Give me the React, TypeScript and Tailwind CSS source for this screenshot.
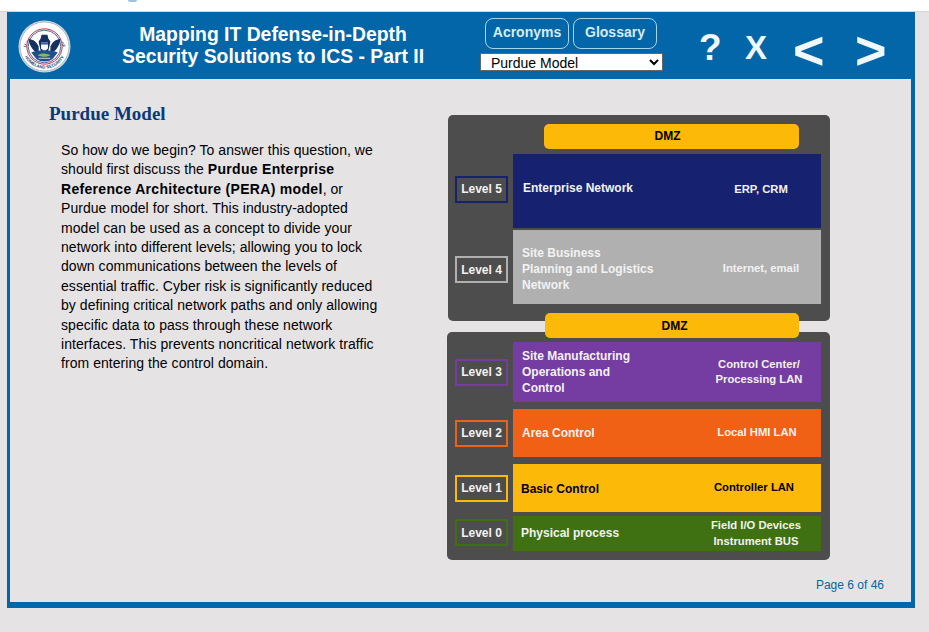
const sans = { fontFamily: '"Liberation Sans", Arial, sans-serif' };

const Seal = () => (
  <svg width="53" height="53" viewBox="0 0 54 54" className="shrink-0">
    <defs>
      <path id="sealTop" d="M7 32 A20.5 20.5 0 0 1 47 32" />
      <path id="sealBottom" d="M4.5 27 A22.5 22.5 0 0 0 49.5 27" />
    </defs>
    <circle cx="27" cy="27" r="26.5" fill="#d3d8de" />
    <circle cx="27" cy="27" r="25" fill="#ffffff" stroke="#9aa8b8" strokeWidth="0.8" />
    <text fontSize="4.4" fontWeight="700" fill="#1d3f78" fontFamily="Liberation Sans">
      <textPath href="#sealTop" startOffset="50%" textAnchor="middle">U.S. DEPARTMENT OF</textPath>
    </text>
    <text fontSize="4.4" fontWeight="700" fill="#1d3f78" fontFamily="Liberation Sans">
      <textPath href="#sealBottom" startOffset="50%" textAnchor="middle">HOMELAND SECURITY</textPath>
    </text>
    <circle cx="27" cy="27" r="18" fill="#ffffff" stroke="#c8323c" strokeWidth="1" />
    <circle cx="27" cy="27" r="16.6" fill="#ffffff" stroke="#1d3f78" strokeWidth="0.8" />
    <path d="M10.5 19 C16 20 19 22 21 27 L21 33 C16 33 12 27 10.5 19 Z" fill="#16305f" />
    <path d="M43.5 19 C38 20 35 22 33 27 L33 33 C38 33 42 27 43.5 19 Z" fill="#16305f" />
    <path d="M24 15 L30 15 L31 19 L33 22 L31 31 L27 33 L23 31 L21 22 L23 19 Z" fill="#16305f" />
    <path d="M23.5 23 H30.5 V29 L27 32 L23.5 29 Z" fill="#ffffff" />
    <path d="M23.5 23 H30.5 V25 H23.5 Z" fill="#2b5ba8" />
    <path d="M13.5 33 C20 30 34 30 40.5 33 L35 40 C30 43 24 43 19 40 Z" fill="#1d4f8f" />
    <path d="M20 36 C24 33 30 34 33 36 C30 38 24 38 20 36 Z" fill="#8bb65a" />
    <path d="M21 39 H33" stroke="#ffffff" strokeWidth="0.8" />
  </svg>
);

const LevelTag = ({ label, border, className = '' }: { label: string; border: string; className?: string }) => (
  <div className={`flex h-[27px] w-[53px] shrink-0 items-center justify-center border-2 text-[12px] font-bold text-[#f2f2f2] ${border} ${className}`}>
    {label}
  </div>
);

const Dmz = ({ className = '' }: { className?: string }) => (
  <div className={`flex h-[25px] items-center justify-center rounded-[5px] bg-[#fdb907] text-[12px] font-bold text-black ${className}`}>
    DMZ
  </div>
);

interface RowProps {
  level: string;
  tagBorder: string;
  tagClass?: string;
  color: string;
  height: string;
  margin?: string;
  textColor?: string;
  name: React.ReactNode;
  nameClass?: string;
  net: React.ReactNode;
  netClass: string;
}

const Row = ({ level, tagBorder, tagClass = '', color, height, margin = '', textColor = 'text-[#f2f2f2]', name, nameClass = 'pl-[9px]', net, netClass }: RowProps) => (
  <div className={`flex items-center ${height} ${margin}`}>
    <LevelTag label={level} border={tagBorder} className={tagClass} />
    <div className={`ml-[5px] flex h-full w-[308px] items-center justify-between text-[12px] font-bold leading-[16.3px] ${color} ${textColor}`}>
      <div className={nameClass}>{name}</div>
      <div className={`w-[100px] text-center text-[11.25px] leading-[15.3px] ${netClass}`}>{net}</div>
    </div>
  </div>
);

export default function App() {
  return (
    <div className="flex h-[632px] w-[929px] flex-col overflow-hidden bg-[#e6e3e5]" style={sans}>
      <div className="h-[12px] shrink-0 border-b border-[#d4d4d4] bg-white">
        <div className="ml-[128px] h-[2px] w-[9px] rounded-b-full bg-[#9cc3dc]" />
      </div>

      <main className="ml-[7px] flex h-[596px] w-[908px] flex-col bg-[#0366a8]">
        <header className="flex h-[67px] shrink-0 items-start text-white">
          <div className="ml-[11px] mt-[8px]">
            <Seal />
          </div>
          <h1 className="ml-[42px] mt-[11px] w-[320px] text-center text-[19.35px] font-bold leading-[22px]">
            Mapping IT Defense-in-Depth
            <br />
            Security Solutions to ICS - Part II
          </h1>
          <div className="ml-[47px] mt-[6px] flex w-[183px] flex-col">
            <div className="ml-[5px] flex gap-[4px] text-[14px] font-bold text-[#d5ecf8]">
              <button className="h-[31px] w-[84px] rounded-[8px] border border-[#a9d4ec] pb-[2px]">Acronyms</button>
              <button className="h-[31px] w-[84px] rounded-[8px] border border-[#a9d4ec] pb-[2px]">Glossary</button>
            </div>
            <select className="mt-[4px] h-[18px] w-[183px] border border-[#666666] bg-white pl-[6px] text-[14px] leading-[16px] text-black">
              <option>Purdue Model</option>
            </select>
          </div>
          <div className="ml-[36px] mt-[13px] flex h-[44px] items-center font-bold text-[#f0f8fc]">
            <span className="w-[21px] text-center text-[37px] leading-none">?</span>
            <span className="ml-[25px] w-[21px] text-center text-[33px] leading-none">X</span>
            <span className="ml-[27px] mt-[5px] w-[30px] text-center text-[54px] leading-none">&lt;</span>
            <span className="ml-[32px] mt-[5px] w-[31px] text-center text-[54px] leading-none">&gt;</span>
          </div>
        </header>

        <div className="mb-[6px] ml-[3px] mr-[4px] flex min-h-0 flex-1 bg-[#e6e3e5]">
          <section className="w-[437px] shrink-0 pl-[39px] pt-[23px]">
            <h2 className="text-[19px] font-bold leading-[24px] text-[#0b3a78]" style={{ fontFamily: '"Liberation Serif", serif' }}>
              Purdue Model
            </h2>
            <p className="ml-[12px] mt-[15px] w-[322px] text-[14px] leading-[19.4px] tracking-[0.05px] text-black">
              So how do we begin? To answer this question, we should first discuss the{' '}
              <b className="tracking-[0.31px]">Purdue Enterprise Reference Architecture (PERA) model</b>, or Purdue model for short. This
              industry-adopted model can be used as a concept to divide your network into different levels; allowing you
              to lock down communications between the levels of essential traffic. Cyber risk is significantly reduced by
              defining critical network paths and only allowing specific data to pass through these network interfaces.
              This prevents noncritical network traffic from entering the control domain.
            </p>
          </section>

          <section className="flex flex-1 flex-col pt-[36px]">
            <div className="ml-[1px] flex h-[206px] w-[382px] flex-col rounded-[5px] bg-[#4d4d4d] pl-[7px] pt-[9px]">
              <Dmz className="ml-[89px] w-[255px] pb-[2px] pr-[8px]" />
              <Row
                level="Level 5"
                tagBorder="border-[#16226e]"
                tagClass="mb-[4px]"
                color="bg-[#162270]"
                height="h-[74px]"
                margin="mt-[5px]"
                name="Enterprise Network"
                nameClass="pb-[6px] pl-[10px]"
                net="ERP, CRM"
                netClass="mr-[10px] pb-[2px]"
              />
              <Row
                level="Level 4"
                tagBorder="border-[#b0b0b0]"
                tagClass="mt-[5px]"
                color="bg-[#b0b0b0]"
                height="h-[74px]"
                margin="mt-[2px]"
                name={<>Site Business<br />Planning and Logistics<br />Network</>}
                nameClass="pl-[9px] pt-[4px]"
                net="Internet, email"
                netClass="mr-[10px] pt-[3px]"
              />
            </div>

            <div className="relative mt-[11px] flex h-[228px] w-[383px] flex-col rounded-[5px] bg-[#4d4d4d] px-[8px] pt-[10px]">
              <Dmz className="absolute left-[98px] top-[-19px] w-[254px] pl-[5px]" />
              <Row
                level="Level 3"
                tagBorder="border-[#753da2]"
                color="bg-[#753da2]"
                height="h-[60px]"
                name={<>Site Manufacturing<br />Operations and<br />Control</>}
                net={<>Control Center/<br />Processing LAN</>}
                netClass="mr-[12px]"
              />
              <Row
                level="Level 2"
                tagBorder="border-[#f06115]"
                color="bg-[#f06115]"
                height="h-[48px]"
                margin="mt-[7px]"
                name="Area Control"
                net="Local HMI LAN"
                netClass="mr-[14px]"
              />
              <Row
                level="Level 1"
                tagBorder="border-[#fdb907]"
                color="bg-[#fdb907]"
                height="h-[48px]"
                margin="mt-[7px]"
                textColor="text-black"
                name="Basic Control"
                nameClass="pl-[8px] pt-[2px]"
                net="Controller LAN"
                netClass="mr-[17px]"
              />
              <Row
                level="Level 0"
                tagBorder="border-[#3f7113]"
                tagClass="mb-[2px]"
                color="bg-[#3f7113]"
                height="h-[35px]"
                margin="mt-[4px]"
                name="Physical process"
                nameClass="pl-[8px]"
                net={<>Field I/O Devices<br />Instrument BUS</>}
                netClass="mr-[15px]"
              />
            </div>

            <p className="mr-[27px] mt-[18px] text-right text-[12px] leading-[14px] text-[#0366a8]">
              Page 6 of 46
            </p>
          </section>
        </div>
      </main>
    </div>
  );
}
